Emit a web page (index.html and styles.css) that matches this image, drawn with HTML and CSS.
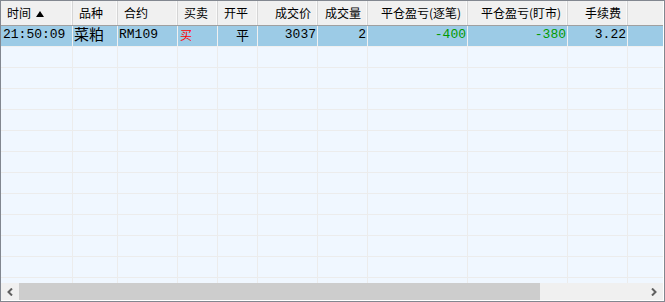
FILE: index.html
```html
<!DOCTYPE html>
<html lang="zh-CN">

<head>
    <meta charset="UTF-8">
    <title>成交记录</title>
    <link rel="stylesheet" href="styles.css">
</head>

<body>
    <div class="grid">
        <!-- 表头 -->
        <div class="row head">
            <div class="cell">时间 <svg class="sort" width="8" height="6" viewBox="0 0 8 6"><path d="M4 0 L8 6 L0 6 Z" fill="#000"/></svg></div>
            <div class="cell">品种</div>
            <div class="cell">合约</div>
            <div class="cell">买卖</div>
            <div class="cell">开平</div>
            <div class="cell right">成交价</div>
            <div class="cell right">成交量</div>
            <div class="cell right">平仓盈亏(逐笔)</div>
            <div class="cell right">平仓盈亏(盯市)</div>
            <div class="cell right">手续费</div>
            <div class="cell last"></div>
        </div>

        <div class="body">
            <div class="row data selected">
                <div class="cell time">21:50:09</div>
                <div class="cell name">菜粕</div>
                <div class="cell code">RM109</div>
                <div class="cell side buy">买</div>
                <div class="cell oc">平</div>
                <div class="cell num">3037</div>
                <div class="cell num">2</div>
                <div class="cell num loss">-400</div>
                <div class="cell num loss">-380</div>
                <div class="cell num">3.22</div>
                <div class="cell last"></div>
            </div>
            <div class="row data empty"><div class="cell"></div><div class="cell"></div><div class="cell"></div><div class="cell"></div><div class="cell"></div><div class="cell"></div><div class="cell"></div><div class="cell"></div><div class="cell"></div><div class="cell"></div><div class="cell last"></div></div>
            <div class="row data empty"><div class="cell"></div><div class="cell"></div><div class="cell"></div><div class="cell"></div><div class="cell"></div><div class="cell"></div><div class="cell"></div><div class="cell"></div><div class="cell"></div><div class="cell"></div><div class="cell last"></div></div>
            <div class="row data empty"><div class="cell"></div><div class="cell"></div><div class="cell"></div><div class="cell"></div><div class="cell"></div><div class="cell"></div><div class="cell"></div><div class="cell"></div><div class="cell"></div><div class="cell"></div><div class="cell last"></div></div>
            <div class="row data empty"><div class="cell"></div><div class="cell"></div><div class="cell"></div><div class="cell"></div><div class="cell"></div><div class="cell"></div><div class="cell"></div><div class="cell"></div><div class="cell"></div><div class="cell"></div><div class="cell last"></div></div>
            <div class="row data empty"><div class="cell"></div><div class="cell"></div><div class="cell"></div><div class="cell"></div><div class="cell"></div><div class="cell"></div><div class="cell"></div><div class="cell"></div><div class="cell"></div><div class="cell"></div><div class="cell last"></div></div>
            <div class="row data empty"><div class="cell"></div><div class="cell"></div><div class="cell"></div><div class="cell"></div><div class="cell"></div><div class="cell"></div><div class="cell"></div><div class="cell"></div><div class="cell"></div><div class="cell"></div><div class="cell last"></div></div>
            <div class="row data empty"><div class="cell"></div><div class="cell"></div><div class="cell"></div><div class="cell"></div><div class="cell"></div><div class="cell"></div><div class="cell"></div><div class="cell"></div><div class="cell"></div><div class="cell"></div><div class="cell last"></div></div>
            <div class="row data empty"><div class="cell"></div><div class="cell"></div><div class="cell"></div><div class="cell"></div><div class="cell"></div><div class="cell"></div><div class="cell"></div><div class="cell"></div><div class="cell"></div><div class="cell"></div><div class="cell last"></div></div>
            <div class="row data empty"><div class="cell"></div><div class="cell"></div><div class="cell"></div><div class="cell"></div><div class="cell"></div><div class="cell"></div><div class="cell"></div><div class="cell"></div><div class="cell"></div><div class="cell"></div><div class="cell last"></div></div>
            <div class="row data empty"><div class="cell"></div><div class="cell"></div><div class="cell"></div><div class="cell"></div><div class="cell"></div><div class="cell"></div><div class="cell"></div><div class="cell"></div><div class="cell"></div><div class="cell"></div><div class="cell last"></div></div>
            <div class="row data empty"><div class="cell"></div><div class="cell"></div><div class="cell"></div><div class="cell"></div><div class="cell"></div><div class="cell"></div><div class="cell"></div><div class="cell"></div><div class="cell"></div><div class="cell"></div><div class="cell last"></div></div>
            <!-- 滚动条上方露出的半行 -->
            <div class="row data tail"><div class="cell"></div><div class="cell"></div><div class="cell"></div><div class="cell"></div><div class="cell"></div><div class="cell"></div><div class="cell"></div><div class="cell"></div><div class="cell"></div><div class="cell"></div><div class="cell last"></div></div>
        </div>

        <!-- 水平滚动条 -->
        <div class="hscroll">
            <div class="btn">
                <svg width="8" height="8" viewBox="0 0 8 8"><path d="M6 0.5 L2.5 4 L6 7.5" fill="none" stroke="#606060" stroke-width="2"/></svg>
            </div>
            <div class="track">
                <div class="thumb"></div>
            </div>
            <div class="btn">
                <svg width="8" height="8" viewBox="0 0 8 8"><path d="M2 0.5 L5.5 4 L2 7.5" fill="none" stroke="#606060" stroke-width="2"/></svg>
            </div>
        </div>
    </div>
</body>

</html>
```

FILE: styles.css
```css
body {
    margin: 0;
    padding: 0;
    background-color: #fff;
}

.grid {
    width: 665px;
    height: 302px;
    box-sizing: border-box;
    border: 1px solid #828790;
    padding: 0 1px 1px 0;
    background-color: #fff;
    display: flex;
    flex-direction: column;
}

.row {
    display: grid;
    grid-template-columns: 72px 45px 60px 40px 40px 60px 50px 100px 100px 60px 1fr;
}

.cell {
    box-sizing: border-box;
    border-right: 1px solid #f0f0f0;
    white-space: nowrap;
}

.cell.last {
    border-right: none;
}

/* 表头 */
.head {
    height: 25px;
    flex: none;
    background-color: #f0f0f0;
    border-bottom: 1px solid #a0a0a0;
    box-sizing: border-box;
    font-family: "Noto Sans CJK SC", "Liberation Sans", sans-serif;
    font-size: 12px;
    color: #000;
}

.head .cell {
    line-height: 24px;
    padding: 0 6px;
    border-right: 1px solid #d5d5d5;
    box-shadow: inset -1px 0 0 #fafafa;
}

.head .cell.right {
    text-align: right;
}

.head .cell.last {
    border-right: none;
    box-shadow: none;
}

.sort {
    vertical-align: 1px;
    margin-left: 2px;
}

/* 数据行 */
.body {
    flex: 1;
    background-color: #f0f7ff;
}

.data {
    height: 21px;
    box-sizing: border-box;
    border-bottom: 1px solid #ececec;
    background-color: #f0f7ff;
    font-family: "Liberation Mono", "Noto Sans CJK SC", monospace;
    font-size: 13px;
    line-height: 15px;
    color: #000;
}

.data .cell {
    border-right: 1px solid #ececec;
    padding-top: 1px;
}

.data .cell.last {
    border-right: none;
}

.data.tail {
    height: 5px;
    border-bottom: none;
}

.selected {
    background-color: #9ccbe6;
    border-bottom-color: #f0f0f0;
}

.selected .cell {
    border-right-color: #f0f0f0;
}

.time {
    padding-left: 2px;
}

.data .name {
    font-family: "Noto Sans CJK SC", sans-serif;
    font-size: 15px;
    line-height: 16px;
    padding-top: 0;
    padding-left: 1px;
}

.code {
    padding-left: 1px;
}

.side {
    font-family: "Noto Sans CJK SC", sans-serif;
    font-size: 12px;
    padding-left: 2px;
}

.buy {
    color: #ff0000;
}

.oc {
    font-family: "Noto Sans CJK SC", sans-serif;
    padding-left: 18px;
}

.num {
    text-align: right;
    padding-right: 1px;
}

.loss {
    color: #009a00;
}

/* 滚动条 */
.hscroll {
    height: 17px;
    flex: none;
    display: flex;
    background-color: #f0f0f0;
}

.btn {
    width: 18px;
    display: flex;
    align-items: center;
    justify-content: center;
    flex: none;
}

.track {
    flex: 1;
    display: flex;
}

.thumb {
    width: 521px;
    background-color: #cdcdcd;
}
```
